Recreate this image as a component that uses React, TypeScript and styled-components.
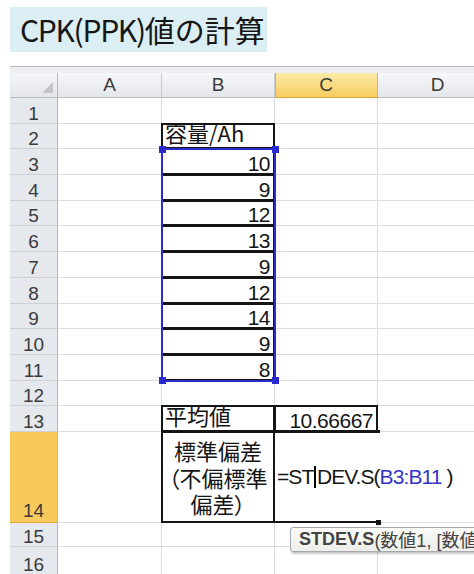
import React from "react";
import styled, { createGlobalStyle, css } from "styled-components";

const GlobalStyle = createGlobalStyle`
  html, body {
    margin: 0;
    padding: 0;
    background: #ffffff;
  }
  body {
    width: 474px;
    height: 574px;
    overflow: hidden;
    font-family: "Liberation Sans", Arial, sans-serif;
  }
`;

const GRID = "#dadcdf";
const INK = "#151515";
const SELECT = "#2b2bcf";

const Page = styled.div`
  padding: 7px 0 0 10px;
`;

const Title = styled.h1`
  margin: 0;
  width: 257px;
  height: 45px;
  box-sizing: border-box;
  padding-left: 10px;
  background: #daeef3;
  color: #161616;
  font: 400 30px/45px "Noto Sans CJK JP", sans-serif;
  white-space: nowrap;
`;

const TitleLatin = styled.span`
  letter-spacing: -1.3px;
`;

const Sheet = styled.div`
  margin-top: 14px;
  display: grid;
  grid-template-columns: 48px 104px 113px 103px 120px;
  grid-template-rows: 7px 25px repeat(13, 25.7px) 91px 24px 28px;
  background: #ffffff;
`;

type Place = { $row: number; $col: number };

const placed = css<Place>`
  grid-row: ${(p) => p.$row};
  grid-column: ${(p) => p.$col};
`;

const TopBar = styled.div`
  grid-row: 1;
  grid-column: 1 / -1;
  background: #eceef1;
  border-top: 1px solid #b7bbc1;
`;

const Corner = styled.div`
  grid-row: 2;
  grid-column: 1;
  display: flex;
  align-items: flex-end;
  justify-content: flex-end;
  padding: 0 4px 4px 0;
  background: linear-gradient(#f5f6f8, #e3e6ea);
  border-right: 1px solid #b6bac0;
  border-bottom: 1px solid #b6bac0;
`;

const ColHead = styled.div<Place & { $active?: boolean }>`
  ${placed};
  display: flex;
  align-items: center;
  justify-content: center;
  font-size: 19px;
  color: #3b3b3b;
  border-right: 1px solid #c6cbd1;
  border-bottom: 1px solid #b6bac0;
  background: linear-gradient(#f6f7f9, #e3e6ea);
  ${(p) =>
    p.$active &&
    css`
      background: linear-gradient(#fbeaa8, #f7cd5f);
      border-right-color: #e4ad45;
      border-bottom-color: #dea33a;
      box-shadow: inset 1px 0 0 #e4ad45;
    `}
`;

const RowHead = styled.div<Place & { $active?: boolean }>`
  ${placed};
  display: flex;
  align-items: flex-end;
  justify-content: center;
  font-size: 19px;
  line-height: 19px;
  color: #3b3b3b;
  background: #e5e8ed;
  border-right: 1px solid #b3b8be;
  border-bottom: 1px solid #ccd0d5;
  ${(p) =>
    p.$active &&
    css`
      background: #f8c95b;
      border-bottom-color: #e0a73d;
      padding-bottom: 2px;
    `}
`;

type Align = "left" | "right" | "center";

const justify = (a: Align) =>
  a === "right" ? "flex-end" : a === "center" ? "center" : "flex-start";

const edgeWidths = (e: string) =>
  ["t", "r", "b", "l"].map((s) => (e.includes(s) ? "2px" : "0")).join(" ");

const Cell = styled.div<
  Place & {
    $align?: Align;
    $middle?: boolean;
    $edges?: string;
    $open?: boolean;
    $flush?: boolean;
  }
>`
  ${placed};
  position: relative;
  display: flex;
  align-items: ${(p) => (p.$middle ? "center" : "flex-end")};
  justify-content: ${(p) => justify(p.$align ?? "left")};
  min-width: 0;
  padding: ${(p) => (p.$flush ? "0" : "0 4px 0 3px")};
  border-right: 1px solid ${(p) => (p.$open ? "transparent" : GRID)};
  border-bottom: 1px solid ${GRID};
  white-space: nowrap;
  color: ${INK};
  ${(p) =>
    p.$edges &&
    css`
      &::after {
        content: "";
        position: absolute;
        inset: -1px;
        z-index: 1;
        pointer-events: none;
        border-style: solid;
        border-color: ${INK};
        border-width: ${edgeWidths(p.$edges)};
      }
    `}
`;

const Num = styled.span`
  font-size: 21px;
  line-height: 17px;
  letter-spacing: -0.5px;
  padding-bottom: 2px;
`;

const Label = styled.span`
  font: 22px/22px "Noto Sans CJK JP", sans-serif;
  font-feature-settings: "palt";
  padding-bottom: 5px;
`;

const Stack = styled.div`
  display: flex;
  flex-direction: column;
  align-items: center;
  width: 100%;
  font: 22px/26.5px "Noto Sans CJK JP", sans-serif;
  font-feature-settings: "palt";
`;

const Formula = styled.span`
  display: flex;
  align-items: center;
  font-size: 21px;
  letter-spacing: -0.9px;
  margin-left: -1px;
`;

const Caret = styled.span`
  display: inline-block;
  width: 1.5px;
  height: 22px;
  margin: 0 1px;
  background: #000;
`;

const Ref = styled.span`
  color: #3434c9;
`;

const Dot = styled.span<{ $size: number }>`
  position: absolute;
  right: ${(p) => -p.$size / 2 - 1}px;
  bottom: ${(p) => -p.$size / 2 - 1}px;
  width: ${(p) => p.$size}px;
  height: ${(p) => p.$size}px;
  background: ${INK};
  z-index: 2;
`;

const Selection = styled.div`
  grid-row: 5 / 14;
  grid-column: 3;
  margin: -1px;
  position: relative;
  z-index: 2;
  border: 2px solid ${SELECT};
  pointer-events: none;
`;

const Handle = styled.span<{ $x: "left" | "right"; $y: "top" | "bottom" }>`
  position: absolute;
  width: 7px;
  height: 7px;
  background: ${SELECT};
  ${(p) => p.$x}: -4.5px;
  ${(p) => p.$y}: -4.5px;
`;

const Tip = styled.div`
  grid-row: 17;
  grid-column: 4 / -1;
  align-self: start;
  justify-self: start;
  width: max-content;
  height: 25px;
  margin: 4px 0 0 15px;
  padding: 0 8px;
  box-sizing: border-box;
  display: flex;
  align-items: center;
  position: relative;
  z-index: 3;
  background: linear-gradient(#fbfbf8, #ededea);
  border: 1px solid #a5a8ac;
  border-radius: 3px;
  box-shadow: 1px 2px 2px rgba(0, 0, 0, 0.22);
  font: 18px "Liberation Sans", "Noto Sans CJK JP", sans-serif;
  color: #434343;
  white-space: nowrap;
`;

const TipName = styled.b`
  font-weight: 700;
`;

const columns = ["A", "B", "C", "D"];
const values = [10, 9, 12, 13, 9, 12, 14, 9, 8];

type Spec = {
  content: React.ReactNode;
  align?: Align;
  middle?: boolean;
  edges?: string;
  open?: boolean;
  flush?: boolean;
  dot?: number;
};

type RowSpec = { n: number; active?: boolean; b?: Spec; c?: Spec };

const rows: RowSpec[] = [
  { n: 1 },
  { n: 2, b: { content: <Label>容量/Ah</Label>, edges: "trbl" } },
  ...values.map((v, i) => ({
    n: i + 3,
    b: { content: <Num>{v}</Num>, align: "right" as Align, edges: "trbl" },
  })),
  { n: 12 },
  {
    n: 13,
    b: { content: <Label>平均値</Label>, edges: "trbl" },
    c: { content: <Num>10.66667</Num>, align: "right", edges: "trbl", dot: 3 },
  },
  {
    n: 14,
    active: true,
    b: {
      content: (
        <Stack>
          <span>標準偏差</span>
          <span>（不偏標準</span>
          <span>偏差）</span>
        </Stack>
      ),
      align: "center",
      middle: true,
      edges: "trbl",
      flush: true,
    },
    c: {
      content: (
        <Formula>
          =ST
          <Caret />
          DEV.S(<Ref>B3:B11</Ref>&nbsp;)
        </Formula>
      ),
      middle: true,
      edges: "tb",
      open: true,
      dot: 5,
    },
  },
  { n: 15 },
  { n: 16 },
];

const App: React.FC = () => {
  return (
    <>
      <GlobalStyle />
      <Page>
        <Title>
          <TitleLatin>CPK(PPK)</TitleLatin>値の計算
        </Title>
        <Sheet>
          <TopBar />
          <Corner>
            <svg width="11" height="11" viewBox="0 0 11 11">
              <polygon points="11,0 11,11 0,11" fill="#c2c6cb" />
            </svg>
          </Corner>
          {columns.map((c, i) => (
            <ColHead key={c} $row={2} $col={i + 2} $active={c === "C"}>
              {c}
            </ColHead>
          ))}

          {rows.map((r) => {
            const gridRow = r.n + 2;
            return (
              <React.Fragment key={r.n}>
                <RowHead $row={gridRow} $col={1} $active={r.active}>
                  {r.n}
                </RowHead>
                <Cell $row={gridRow} $col={2} />
                {[r.b, r.c].map((spec, i) =>
                  spec ? (
                    <Cell
                      key={i}
                      $row={gridRow}
                      $col={i + 3}
                      $align={spec.align}
                      $middle={spec.middle}
                      $edges={spec.edges}
                      $open={spec.open}
                      $flush={spec.flush}
                    >
                      {spec.content}
                      {spec.dot && <Dot $size={spec.dot} />}
                    </Cell>
                  ) : (
                    <Cell key={i} $row={gridRow} $col={i + 3} />
                  )
                )}
                <Cell $row={gridRow} $col={5} />
              </React.Fragment>
            );
          })}

          <Selection>
            <Handle $x="left" $y="top" />
            <Handle $x="right" $y="top" />
            <Handle $x="left" $y="bottom" />
            <Handle $x="right" $y="bottom" />
          </Selection>

          <Tip>
            <TipName>STDEV.S</TipName>(数値1, [数値2], ...)
          </Tip>
        </Sheet>
      </Page>
    </>
  );
};

export default App;
